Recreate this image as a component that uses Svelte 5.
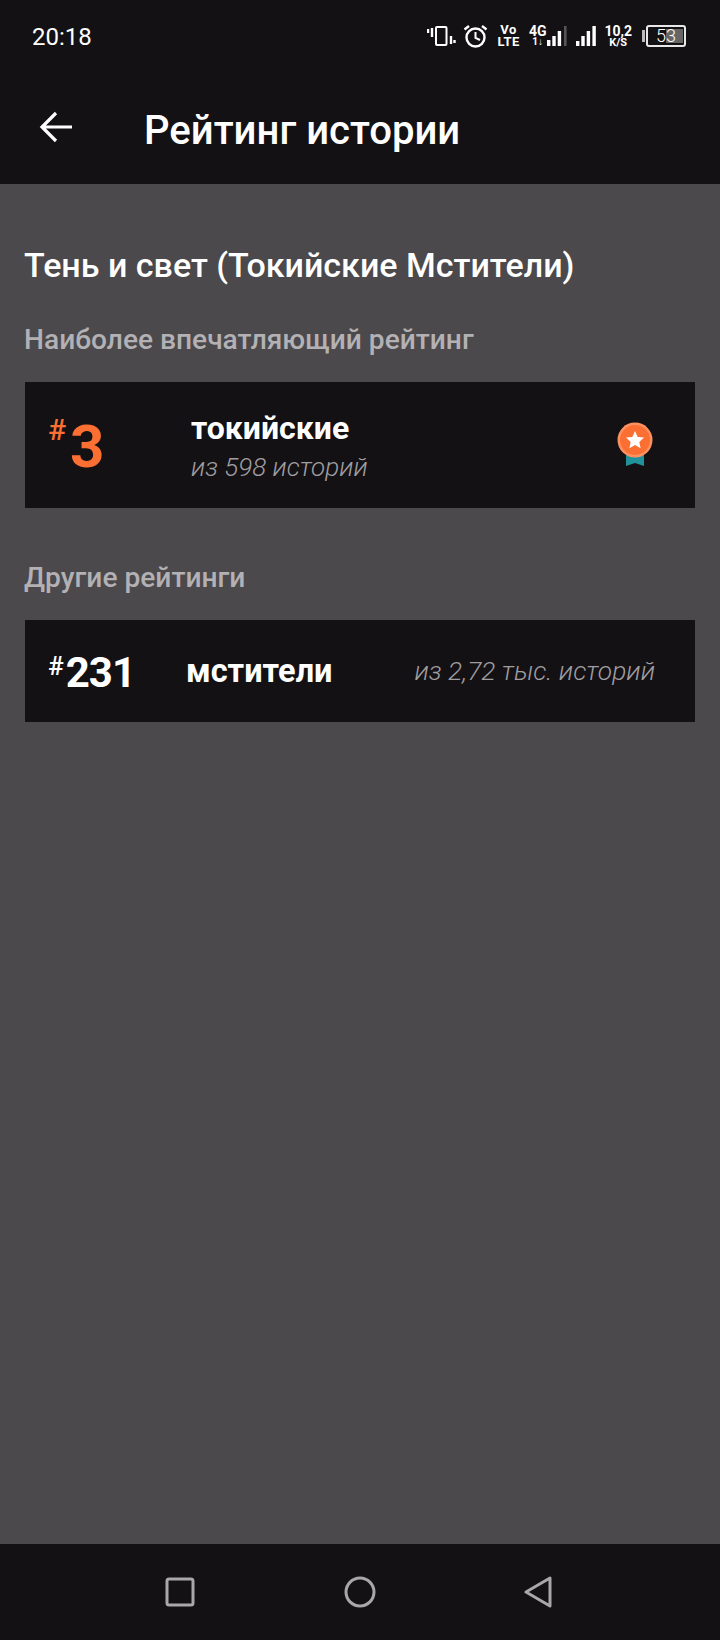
<script>
	const rows = [{ rank: 231, name: 'мстители', total: 'из 2,72 тыс. историй' }];
</script>

<div class="screen">
	<header class="top">
		<div class="status">
			<span class="time">20:18</span>
			<div class="status-icons">
				<svg class="vibrate" width="29" height="20" viewBox="0 0 29 20" fill="none" stroke="#fff">
					<rect x="9" y="1" width="10.5" height="18" rx="1" stroke-width="2" />
					<path d="M1 3v4M5 2v9M24 10v8M27.5 14v3" stroke-width="2.4" />
				</svg>
				<svg class="alarm" width="25" height="24" viewBox="0 0 25 24" fill="none" stroke="#fff" stroke-width="2.4">
					<circle cx="12.5" cy="13.5" r="9" />
					<path d="M12.5 8v5.8l4.5 2.2" stroke-width="2" />
					<path d="M1.5 5.5 6 2M23.5 5.5 19 2" />
				</svg>
				<div class="stack volte"><span>Vo</span><span>LTE</span></div>
				<div class="sig-group">
					<div class="stack g4"><span>4G</span><span class="arrows">1↓</span></div>
					<svg width="20" height="21" viewBox="0 0 20 21" fill="#fff">
						<rect x="0" y="14" width="3.4" height="6" />
						<rect x="5.3" y="10" width="3.4" height="10" />
						<rect x="10.7" y="5" width="3.4" height="15" />
						<rect x="17" y="0" width="2.6" height="20" fill="#555" />
					</svg>
				</div>
				<svg class="sig" width="20" height="21" viewBox="0 0 20 21" fill="#fff">
					<rect x="0" y="15" width="3.4" height="5" />
					<rect x="5.3" y="10" width="3.4" height="10" />
					<rect x="10.7" y="5" width="3.4" height="15" />
					<rect x="16.4" y="0" width="3.4" height="20" />
				</svg>
				<div class="stack speed"><span>10,2</span><span class="unit">K/S</span></div>
				<div class="battery">
					<span class="nub"></span>
					<div class="shell"><span class="fill"></span><span class="pct">53</span></div>
				</div>
			</div>
		</div>
		<div class="appbar">
			<svg class="back" width="34" height="32" viewBox="0 0 34 32" fill="none" stroke="#fff" stroke-width="3.2">
				<path d="M33 16H3M17 2 3 16l14 14" />
			</svg>
			<h1>Рейтинг истории</h1>
		</div>
	</header>

	<main>
		<h2>Тень и свет (Токийские Мстители)</h2>

		<h3>Наиболее впечатляющий рейтинг</h3>
		<div class="card best">
			<div class="place"><span class="hash">#</span><span class="num">3</span></div>
			<div class="info">
				<span class="tag">токийские</span>
				<span class="total">из 598 историй</span>
			</div>
			<svg class="medal" width="38" height="46" viewBox="0 0 38 46">
				<path d="M10 28h18v16l-9-3-9 3z" fill="#21929b" />
				<circle cx="19" cy="18" r="17.5" fill="#ff9060" />
				<circle cx="19" cy="18" r="15" fill="#fb6f33" />
				<path d="m19 9 2.7 5.9 6.3.7-4.7 4.3 1.3 6.3-5.6-3.2-5.6 3.2 1.3-6.3-4.7-4.3 6.3-.7z" fill="#fff" />
			</svg>
		</div>

		<h3 class="others">Другие рейтинги</h3>
		{#each rows as row}
			<div class="card other">
				<div class="place"><span class="hash">#</span><span class="num">{row.rank}</span></div>
				<span class="tag">{row.name}</span>
				<span class="total">{row.total}</span>
			</div>
		{/each}
	</main>

	<nav class="navbar">
		<svg width="30" height="30" viewBox="0 0 30 30" fill="none" stroke="#a9a7aa" stroke-width="3" stroke-linejoin="round">
			<rect x="2" y="2" width="26" height="26" rx="2" />
		</svg>
		<svg width="32" height="32" viewBox="0 0 32 32" fill="none" stroke="#a9a7aa" stroke-width="3">
			<circle cx="16" cy="16" r="14" />
		</svg>
		<svg width="28" height="32" viewBox="0 0 28 32" fill="none" stroke="#a9a7aa" stroke-width="3" stroke-linejoin="round">
			<path d="M2 16 26 2v28z" />
		</svg>
	</nav>
</div>

<style>
	:global(body) {
		margin: 0;
		background: #4b494c;
	}

	.screen {
		width: 720px;
		height: 1640px;
		display: flex;
		flex-direction: column;
		background: #4b494c;
		font-family: Roboto, "Noto Sans", sans-serif;
		color: #fff;
		overflow: hidden;
	}

	.top {
		height: 184px;
		flex-shrink: 0;
		background: #131114;
	}

	.status {
		height: 72px;
		display: flex;
		align-items: center;
		justify-content: space-between;
		padding: 0 34px 0 32px;
		box-sizing: border-box;
	}

	.time {
		font-size: 24px;
		position: relative;
		top: 1px;
	}

	.status-icons {
		display: flex;
		align-items: center;
		font-weight: 700;
		line-height: 1;
	}

	.alarm {
		margin-left: 7px;
	}

	.stack {
		display: flex;
		flex-direction: column;
		align-items: center;
	}

	.volte {
		font-size: 13px;
		line-height: 12px;
		letter-spacing: 0.5px;
		margin-left: 9px;
	}

	.g4 {
		font-size: 14px;
		line-height: 12px;
		margin-right: 1px;
	}

	.arrows {
		font-size: 10px;
		line-height: 10px;
	}

	.sig-group {
		display: flex;
		align-items: center;
		margin-left: 9px;
	}

	.sig {
		margin-left: 9px;
	}

	.speed {
		font-size: 14px;
		line-height: 13px;
		margin-left: 8px;
	}

	.unit {
		font-size: 11px;
		line-height: 9px;
	}

	.battery {
		display: flex;
		align-items: center;
		gap: 1px;
		margin-left: 10px;
	}

	.nub {
		width: 3px;
		height: 12px;
		background: #bbb;
	}

	.shell {
		position: relative;
		width: 36px;
		height: 18px;
		border: 2px solid #e8e8e8;
		border-radius: 3px;
		display: flex;
		align-items: center;
		justify-content: center;
	}

	.fill {
		position: absolute;
		top: 2px;
		bottom: 2px;
		right: 1px;
		width: 17px;
		background: #666;
	}

	.pct {
		position: relative;
		font-size: 18px;
		font-weight: 300;
	}

	.appbar {
		height: 112px;
		display: flex;
		align-items: center;
		padding-left: 39px;
	}

	.back {
		position: relative;
		top: -1px;
	}

	h1 {
		margin: 4px 0 0 71px;
		font-size: 40.1px;
		font-weight: 500;
	}

	main {
		flex: 1;
		padding: 0 25px 0 24px;
	}

	h2 {
		margin: 59px 0 0;
		font-size: 34px;
		line-height: 44px;
		font-weight: 500;
	}

	h3 {
		margin: 35px 0 0;
		font-size: 28.15px;
		line-height: 36px;
		font-weight: 500;
		color: #b3b1b4;
	}

	h3.others {
		margin-top: 52px;
	}

	.card {
		display: flex;
		align-items: center;
		background: #131114;
		margin: 24px 0 0 1px;
		box-sizing: border-box;
	}

	.best {
		height: 126px;
		padding: 0 41px 0 23px;
	}

	.other {
		height: 102px;
		padding: 0 40px 0 23px;
	}

	.place {
		display: flex;
		align-items: flex-start;
		font-weight: 700;
		line-height: 1;
	}

	.hash {
		font-weight: 500;
	}

	.best .hash {
		font-size: 30px;
		margin-top: 4px;
	}

	.other .hash {
		font-size: 26px;
		margin-top: 4px;
	}

	.best .place {
		width: 143px;
		color: #fb6f33;
		position: relative;
		top: -1px;
	}

	.best .num {
		font-size: 60px;
		margin-left: 4px;
		margin-top: 6px;
	}

	.other .num {
		font-size: 42px;
		letter-spacing: -1px;
		margin-left: 2px;
		margin-top: 3px;
	}

	.other .place {
		width: 138px;
	}

	.info {
		display: flex;
		flex-direction: column;
		flex: 1;
		gap: 5px;
		padding-top: 2px;
	}

	.tag {
		font-size: 32px;
		font-weight: 700;
		line-height: 36px;
	}

	.other .tag {
		font-size: 32.5px;
	}

	.total {
		font-size: 26px;
		font-weight: 300;
		font-style: italic;
		color: #a09ea1;
		line-height: 32px;
	}

	.other .total {
		margin-left: auto;
		font-size: 26.3px;
	}

	.navbar {
		height: 96px;
		flex-shrink: 0;
		background: #131114;
		display: flex;
		align-items: center;
		justify-content: space-between;
		padding: 0 168px 0 165px;
		box-sizing: border-box;
	}
</style>
